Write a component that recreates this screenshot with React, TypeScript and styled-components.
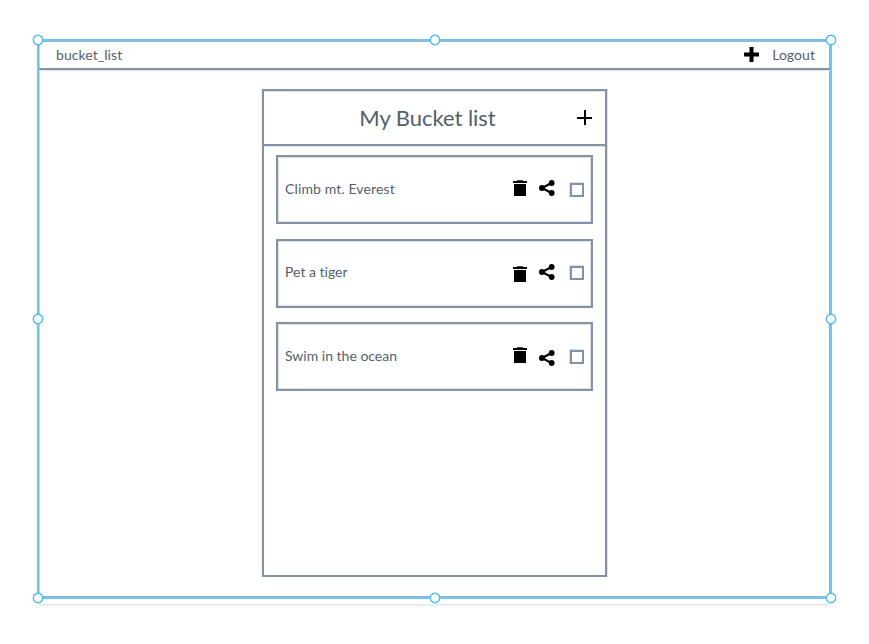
import React from "react";
import styled, { createGlobalStyle } from "styled-components";

const line = "#8492a6";
const soft = "#dce1ea";
const blue = "#6fc6f5";

const GlobalStyle = createGlobalStyle`
  * { box-sizing: border-box; }
  html, body { margin: 0; background: #fff; }
  body {
    font-family: Lato, sans-serif;
    font-variant-ligatures: none;
    color: #535f6b;
    overflow: hidden;
  }
  svg { display: block; flex: none; }
`;

const Canvas = styled.main`
  width: 869px;
  height: 644px;
  padding: 39px 0 0 37px;
`;

const Frame = styled.section`
  position: relative;
  width: 795px;
  height: 560px;
  border: 2px solid ${blue};
  box-shadow: inset 0 1px 0 #a3b3c6, inset 0 -1px 0 #9caec4, inset -1px 0 0 #8fb3d2,
    inset 1px 0 0 #a9dcf8, 0 5px 0 #fff, 0 7px 3px -1px #d5dae2;
  display: flex;
  flex-direction: column;
  align-items: center;
`;

const Navbar = styled.header`
  align-self: stretch;
  height: 29px;
  border-bottom: 2px solid ${line};
  box-shadow: 0 1px 0 ${soft};
  display: flex;
  align-items: center;
  padding: 0 15px 0 17px;
  font-size: 14px;
`;

const Brand = styled.span`
  flex: 1;
  letter-spacing: 0.06px;
`;

const Logout = styled.span`
  margin-left: 13px;
  letter-spacing: 0.05px;
`;

const Panel = styled.section`
  width: 345px;
  height: 488px;
  margin-top: 19px;
  border: 2px solid ${line};
  box-shadow: inset 0 1px 0 ${soft}, 1px 0 0 ${soft}, -1px 0 0 #f0f2f6;
`;

const PanelHeader = styled.div`
  height: 55px;
  border-bottom: 2px solid ${line};
  box-shadow: 0 1px 0 ${soft};
  display: grid;
  grid-template-columns: 1fr auto;
  align-items: center;
  padding-right: 13px;
`;

const Title = styled.h1`
  margin: 0;
  padding-left: 14px;
  text-align: center;
  font-size: 22px;
  line-height: 30px;
  font-weight: 400;
  letter-spacing: -0.04px;
`;

const List = styled.ul`
  list-style: none;
  margin: 0;
  padding: 9px 12px 0;
  display: flex;
  flex-direction: column;
`;

const Card = styled.li<{ $gap: number }>`
  height: 69px;
  margin-bottom: ${(p) => p.$gap}px;
  border: 2px solid ${line};
  box-shadow: inset 1px 0 0 ${soft}, inset -1px 0 0 ${soft}, inset 0 1px 0 ${soft},
    inset 0 -1px 0 ${soft};
  display: flex;
  align-items: flex-start;
  padding: 0 7px;
`;

const Label = styled.span<{ $top: number; $spacing: number }>`
  flex: 1;
  margin-top: ${(p) => p.$top}px;
  font-size: 14px;
  line-height: 18px;
  letter-spacing: ${(p) => p.$spacing}px;
`;

const IconSlot = styled.span<{ $top: number; $right: number }>`
  margin: ${(p) => p.$top}px ${(p) => p.$right}px 0 0;
`;

const Checkbox = styled.span<{ $top: number }>`
  width: 14px;
  height: 14px;
  margin-top: ${(p) => p.$top}px;
  border: 2px solid ${line};
  box-shadow: -1px 0 0 ${soft}, 0 -1px 0 ${soft};
`;

const Selection = styled.div`
  position: absolute;
  inset: -1px;
  pointer-events: none;
`;

const Handle = styled.i<{ $x: number; $y: number }>`
  position: absolute;
  left: ${(p) => p.$x}%;
  top: ${(p) => p.$y}%;
  width: 10px;
  height: 10px;
  margin: -5px;
  border: 1px solid #45b8f5;
  border-radius: 50%;
  background: #fff;
  box-shadow: 0 0 0 0.4px #45b8f5;
`;

const Trash = () => (
  <svg width="14" height="17" viewBox="0 0 14 17">
    <path d="M4.5 0.3H9.5L10.5 1H14V3H0V1H3.5ZM1 4H13V16H1Z" />
  </svg>
);

const Share = () => (
  <svg width="16" height="16" viewBox="0 0 16 16">
    <path d="M12.5 3.1 3 8 12.5 12.9" fill="none" stroke="#000" strokeWidth="2.2" />
    <circle cx="12.7" cy="3" r="2.9" />
    <circle cx="2.9" cy="8" r="2.9" />
    <circle cx="12.7" cy="13" r="2.9" />
  </svg>
);

const items = [
  { text: "Climb mt. Everest", gap: 15, label: 23, spacing: 0.12, trash: 23, share: 23, box: 26 },
  { text: "Pet a tiger", gap: 14, label: 22, spacing: 0, trash: 25, share: 23, box: 25 },
  { text: "Swim in the ocean", gap: 0, label: 23, spacing: 0, trash: 23, share: 26, box: 26 },
];

const handles = [
  [0, 0], [50, 0], [100, 0], [0, 50], [100, 50], [0, 100], [50, 100], [100, 100],
];

export default function App() {
  return (
    <Canvas>
      <GlobalStyle />
      <Frame>
        <Navbar>
          <Brand>bucket_list</Brand>
          <svg width="15" height="15" viewBox="0 0 15 15">
            <path d="M5.5 0H9.5V5.5H15V9.5H9.5V15H5.5V9.5H0V5.5H5.5Z" />
          </svg>
          <Logout>Logout</Logout>
        </Navbar>
        <Panel>
          <PanelHeader>
            <Title>My Bucket list</Title>
            <svg width="15" height="15" viewBox="0 0 15 15">
              <path d="M7 0H9V7H15V9H9V15H7V9H0V7H7Z" />
            </svg>
          </PanelHeader>
          <List>
            {items.map((it) => (
              <Card key={it.text} $gap={it.gap}>
                <Label $top={it.label} $spacing={it.spacing}>{it.text}</Label>
                <IconSlot $top={it.trash} $right={12}><Trash /></IconSlot>
                <IconSlot $top={it.share} $right={15}><Share /></IconSlot>
                <Checkbox $top={it.box} />
              </Card>
            ))}
          </List>
        </Panel>
        <Selection>
          {handles.map(([x, y]) => (
            <Handle key={`${x}-${y}`} $x={x} $y={y} />
          ))}
        </Selection>
      </Frame>
    </Canvas>
  );
}
